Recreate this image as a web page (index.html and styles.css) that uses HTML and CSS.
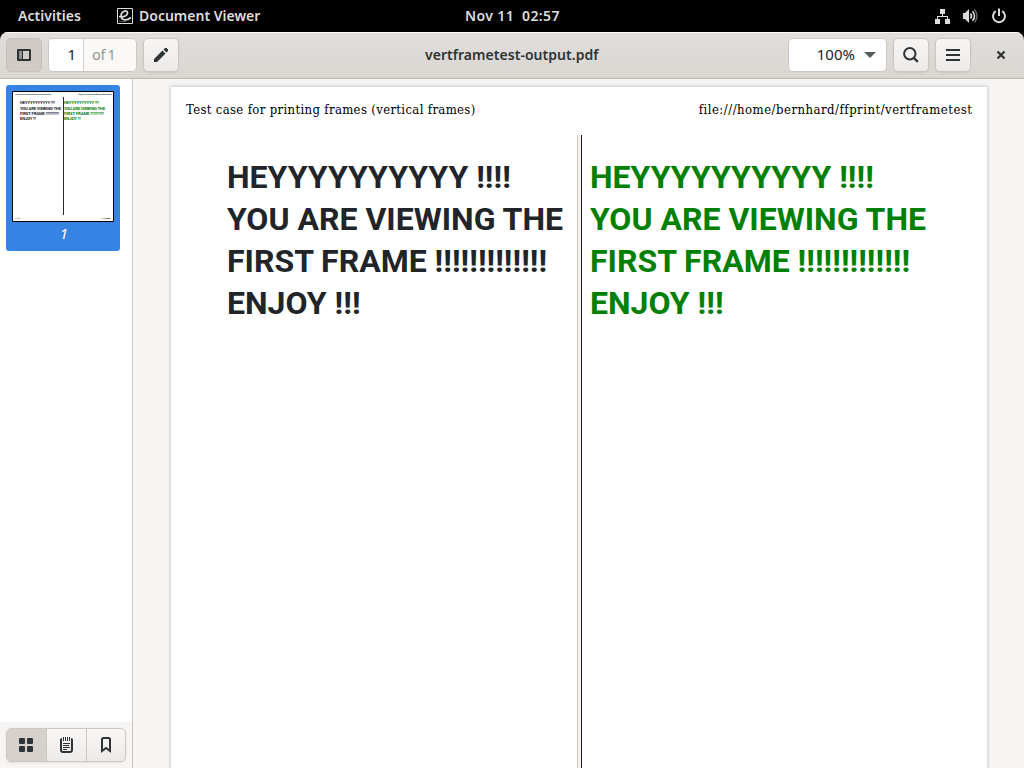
FILE: index.html
```html
<!DOCTYPE html>
<html lang="en">
<head>
<meta charset="utf-8">
<title>vertframetest-output.pdf</title>
<link rel="stylesheet" href="styles.css">
</head>
<body>
<div class="topbar">
  <span class="activities">Activities</span>
  <svg class="app-icon" width="16" height="16" viewBox="0 0 16 16"><path d="M.5.5h15v15H.5z" fill="none" stroke="#ddd"/><path d="M2 8.500c5 1 9-1 8.500-4C10 1.500 4 3 4 8c0 4 5 5.500 10 1.500" fill="none" stroke="#ddd" stroke-width="1.700"/><path d="M2 13.500h7" stroke="#888" stroke-width=".6"/></svg>
  <span class="app-name">Document Viewer</span>
  <span class="clock">Nov 11&nbsp; 02:57</span>
  <div class="status">
    <svg width="16" height="16" viewBox="0 0 16 16" fill="#ddd"><path d="M5 1h5v5H5zM0 11h5v5H0zM10 11h5v5h-5zM7 6h1v2h5v3h-1V9H3v2H2V8h5z"/></svg>
    <svg class="volume" width="16" height="16" viewBox="0 0 16 16" fill="none"><path d="M1 5h2l4-4v14l-4-4H1z" fill="#ddd"/><path d="M8.500 5.500q2 2.500 0 5M10.500 3.200q4 4.800 0 9.600" stroke="#ddd" stroke-width="1.600"/><path d="M12.500 1.500q5 6.500 0 13" stroke="#666" stroke-width="1.500"/></svg>
    <svg width="16" height="16" viewBox="0 0 16 16" fill="none" stroke="#ddd" stroke-width="2"><path d="M4.700 3.200a6 6 0 1 0 6.600 0M8 .5V8"/></svg>
  </div>
</div>
<div class="window">
  <header class="headerbar">
    <button class="btn pressed"><svg width="16" height="16" viewBox="0 0 16 16"><path d="M2 3h12v10H2z" fill="none" stroke="#2e3436" stroke-width="2" stroke-linejoin="round"/><path d="M3 4h3v8H3z" fill="#928f8c"/><path d="M6 3h1v10H6z" fill="#2e3436"/></svg></button>
    <div class="pager"><span class="page-now">1</span><span class="page-total">of 1</span></div>
    <button class="btn"><svg width="16" height="16" viewBox="0 0 16 16" fill="#2e3436"><path d="M1 12L9.500 3.500l3 3L4 15H1zM10.500 2.500L12 1h1.500L15 2.500V4l-1.500 1.500z"/></svg></button>
    <span class="title">vertframetest-output.pdf</span>
    <div class="right">
      <div class="zoom"><span>100%</span><svg width="12" height="6" viewBox="0 0 12 6"><path d="M0 0h12L6 6z" fill="#555b5b"/></svg></div>
      <button class="btn search"><svg width="16" height="16" viewBox="0 0 16 16" fill="none" stroke="#2e3436" stroke-width="2"><circle cx="6.800" cy="6.800" r="5.700"/><path d="M11 11l3.800 3.800" stroke-width="2.400"/></svg></button>
      <button class="btn"><svg width="16" height="16" viewBox="0 0 16 16" fill="#2e3436"><path d="M1 2h14v2H1zM1 7h14v2H1zM1 12h14v2H1z"/></svg></button>
      <svg class="close" width="16" height="16" viewBox="0 0 16 16"><path d="M4.500 4.500l7 7M11.500 4.500l-7 7" stroke="#2e3436" stroke-width="2.200"/></svg>
    </div>
  </header>
  <div class="body">
    <aside class="sidebar">
      <div class="thumbs">
        <div class="thumb">
          <svg class="thumb-page" width="102" height="131" viewBox="0 0 102 131">
            <path d="M.5.5h101v130H.5z" fill="#fff" stroke="#000"/>
            <g font-size="2.500" fill="#222"><text x="3" y="4" textLength="36">Test case for printing frames (vertical frames)</text><text x="66" y="4" textLength="33">file:///home/bernhard/ffprint/vertframetest</text><text x="3" y="128">1 of 1</text><text x="89" y="128" textLength="10">11/11/20 02:57</text></g>
            <g class="thumb-head" fill="#222"><text x="8" y="13" textLength="35">HEYYYYYYYYYY !!!!</text><text x="8" y="19" textLength="41">YOU ARE VIEWING THE</text><text x="8" y="24" textLength="39">FIRST FRAME !!!!!!!!!!!!!</text><text x="8" y="29" textLength="16">ENJOY !!!</text></g>
            <g class="thumb-head" fill="green"><text x="52" y="13" textLength="35">HEYYYYYYYYYY !!!!</text><text x="52" y="19" textLength="41">YOU ARE VIEWING THE</text><text x="52" y="24" textLength="40">FIRST FRAME !!!!!!!!!!!!!</text><text x="52" y="29" textLength="17">ENJOY !!!</text></g>
            <path d="M51.500 6v118" stroke="#2c2a26"/>
          </svg>
          <span class="thumb-number">1</span>
        </div>
      </div>
      <div class="side-footer">
        <div class="switcher">
          <span class="tab active"><svg width="16" height="16" viewBox="0 0 16 16" fill="#2e3436"><rect x="1" y="1" width="6" height="6" rx="1"/><rect x="9" y="1" width="6" height="6" rx="1"/><rect x="1" y="9" width="6" height="6" rx="1"/><rect x="9" y="9" width="6" height="6" rx="1"/></svg></span>
          <span class="tab"><svg width="16" height="16" viewBox="0 0 16 16"><path d="M4 2Q3 2 3 3v10q0 2 2 2h7q2 0 2-2V3q0-1-1-1" fill="none" stroke="#2e3436" stroke-width="2"/><path d="M5.500 0v4M7.500 0v4M9.500 0v4M11.500 0v4M5 6.500h7M5 8.500h6M5 10.500h7M5 12.500h4" stroke="#2e3436"/></svg></span>
          <span class="tab"><svg width="16" height="16" viewBox="0 0 16 16"><path d="M4 14V2.500Q4 1 5.500 1h5Q12 1 12 2.500V14l-4-3z" fill="none" stroke="#2e3436" stroke-width="2"/></svg></span>
        </div>
      </div>
    </aside>
    <main class="viewer">
      <article class="page">
        <div class="running-head"><span class="doc-title">Test case for printing frames (vertical frames)</span><span class="doc-url">file:///home/bernhard/ffprint/vertframetest</span></div>
        <div class="frames">
          <h1 class="frame dark"><span>HEYYYYYYYYYY !!!!</span><span>YOU ARE VIEWING THE</span><span>FIRST FRAME !!!!!!!!!!!!!</span><span>ENJOY !!!</span></h1>
          <div class="divider"></div>
          <h1 class="frame green"><span>HEYYYYYYYYYY !!!!</span><span>YOU ARE VIEWING THE</span><span>FIRST FRAME !!!!!!!!!!!!!</span><span>ENJOY !!!</span></h1>
        </div>
      </article>
    </main>
  </div>
</div>
</body>
</html>
```
FILE: styles.css
```css
* { box-sizing: border-box; }
body { margin: 0; width: 1024px; height: 768px; overflow: hidden; background: #000; font-family: "Noto Sans", "Open Sans", sans-serif; font-size: 15px; color: #2e3436; display: flex; flex-direction: column; }
svg { display: block; flex: none; }
.topbar { height: 32px; flex: none; display: grid; grid-template-columns: 99px 22px 326px 130px 1fr; align-items: center; padding-left: 18px; color: #ddd; font-weight: 600; font-size: 14px; line-height: 18px; padding-bottom: 1px; white-space: nowrap; }
.activities { letter-spacing: .06px; }
.clock { letter-spacing: .38px; }
.status { display: flex; gap: 12px; justify-content: flex-end; padding: 1px 17px 0 0; }
.volume { margin: 0 1px 0 -1px; }
.window { flex: 1; min-height: 0; display: flex; flex-direction: column; border-radius: 8px 8px 0 0; overflow: hidden; }
.headerbar { height: 47px; flex: none; display: grid; grid-template-columns: 42px 95px 36px 1fr 236px; align-items: center; padding: 0 0 1px 6px; background: linear-gradient(#e1dedb, #dad6d2); border-bottom: 1px solid #bfb8b1; box-shadow: inset 0 1px #f9f8f7; }
.btn { width: 36px; height: 34px; padding: 0; border: 1px solid #cdc7c2; border-radius: 5px; background: linear-gradient(#f6f5f4, #edebe9); display: flex; align-items: center; justify-content: center; box-shadow: 0 1px 2px rgba(0,0,0,.08); }
.pressed { background: #d0cbc6; border-color: #c5bfb9; box-shadow: none; }
.pager { width: 89px; height: 34px; border: 1px solid #cdc7c2; border-radius: 5px; display: grid; grid-template-columns: 35px 1fr; line-height: 31px; overflow: hidden; background: #faf9f8; }
.page-now { text-align: right; padding-right: 7px; background: #fff; border-right: 1px solid #d5d0cc; color: #222; }
.page-total { padding-left: 8px; color: #929595; font-size: 14.500px; word-spacing: -1.500px; letter-spacing: -.2px; }
.title { font-weight: 600; font-size: 14px; line-height: 18px; padding: 1px 0 0 246px; letter-spacing: .04px; white-space: nowrap; }
.right { display: flex; align-items: center; }
.zoom { width: 99px; height: 34px; border: 1px solid #cdc7c2; border-radius: 5px; background: #fff; display: flex; align-items: center; justify-content: flex-end; gap: 9px; padding-right: 10px; color: #222; }
.zoom span { padding-bottom: 2px; }
.search { margin: 0 6px; }
.close { margin-left: 22px; }
.body { flex: 1; min-height: 0; display: flex; background: #f6f5f4; }
.sidebar { width: 133px; flex: none; border-right: 1px solid #cdc7c2; display: flex; flex-direction: column; }
.thumbs { flex: 1; background: #fff; padding: 6px; }
.thumb { width: 114px; height: 166px; background: #3584e4; border-radius: 3px; padding: 6px 0 0 6px; display: flex; flex-direction: column; }
.thumb-page { font-family: Roboto, sans-serif; }
.thumb-head { font-size: 4.200px; font-weight: 700; }
.thumb-number { color: #fff; font-style: italic; text-align: center; width: 104px; line-height: 22px; }
.side-footer { height: 46px; padding: 6px; }
.switcher { width: 120px; height: 34px; border: 1px solid #cdc7c2; border-radius: 5px; display: grid; grid-template-columns: 40px 40px 1fr; overflow: hidden; background: linear-gradient(#f8f7f6, #edebe9); box-shadow: 0 1px 2px rgba(0,0,0,.08); }
.tab { display: flex; align-items: center; padding-left: 11px; border-right: 1px solid #cdc7c2; }
.tab:last-child { border-right: 0; }
.active { background: #d6d1cd; }
.viewer { flex: 1; padding: 8px 37px 0 38px; display: flex; }
.page { flex: 1; background: #fff; box-shadow: 0 0 3px 1px rgba(0,0,0,.17); display: flex; flex-direction: column; }
.running-head { height: 48px; display: flex; justify-content: space-between; padding: 13px 15px 0; color: #000; font: 13px/20px "DejaVu Serif", serif; font-stretch: condensed; white-space: nowrap; }
.doc-title { letter-spacing: .34px; }
.doc-url { letter-spacing: .49px; margin-right: -.49px; }
.frames { flex: 1; display: grid; grid-template-columns: 406px 5px 1fr; }
.divider { border-left: 1px solid #d0c9c2; border-right: 1px solid #1d1b19; background: #f5f1ed; }
.frame { margin: 0; padding-top: 21px; font: 700 32px/42px Roboto, sans-serif; white-space: nowrap; }
.frame span { display: block; }
.dark { padding-left: 56px; color: #212529; }
.green { padding-left: 8px; color: #008000; }
```
